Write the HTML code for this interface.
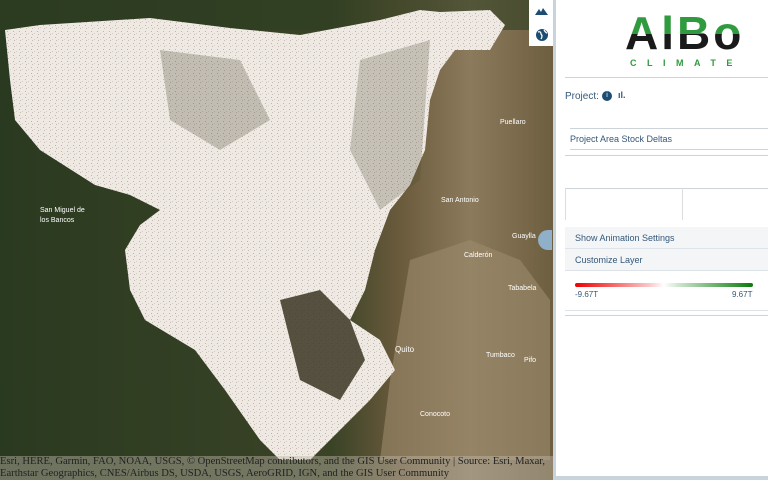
<!DOCTYPE html>
<html><head><style>
*{margin:0;padding:0;box-sizing:border-box}
body{width:768px;height:480px;overflow:hidden;font-family:"Liberation Sans",sans-serif;background:#fff;position:relative}
#map{position:absolute;left:0;top:0;width:553px;height:480px;overflow:hidden}
#attr{position:absolute;left:0;top:456px;width:553px;height:24px;background:rgba(190,185,170,0.45);font-family:"Liberation Serif",serif;font-size:10.6px;line-height:12px;color:#222;white-space:nowrap;padding-left:0}
#panel{position:absolute;left:553px;top:0;width:215px;height:480px;background:#fff;border-left:3px solid #c9d3dc}
.ctrl{position:absolute;left:529px;top:0;width:24px;height:46px;background:#fff}
.t{color:#34587a;font-size:9px}
</style></head><body>
<div id="map">
<svg width="553" height="480" viewBox="0 0 553 480">
<defs>
<linearGradient id="bg" x1="0" x2="1" y1="0" y2="0">
<stop offset="0" stop-color="#2a3a20"/><stop offset="0.6" stop-color="#3a4326"/><stop offset="0.72" stop-color="#6a5a3c"/><stop offset="0.85" stop-color="#8c7a5c"/><stop offset="1" stop-color="#6e5e40"/></linearGradient>
<pattern id="sp" width="6" height="6" patternUnits="userSpaceOnUse"><rect width="6" height="6" fill="#efe9e4"/><rect x="1" y="1" width="1" height="1" fill="#e9a0a0"/><rect x="4" y="3" width="1" height="1" fill="#a8e8a8"/><rect x="2" y="4" width="1" height="1" fill="#c8b8b0"/></pattern>
</defs>
<rect width="553" height="480" fill="url(#bg)"/>
<rect x="0" y="0" width="553" height="30" fill="#2d3d22" opacity="0.6"/>
<polygon points="410,260 470,240 520,260 550,300 550,460 380,460 390,380" fill="#9c8a6c" opacity="0.6"/>
<polygon fill="url(#sp)" points="5,30 40,25 150,18 230,28 300,35 380,20 420,10 440,12 490,10 505,25 490,50 455,50 440,70 430,100 425,150 410,185 390,210 375,250 365,290 350,320 380,340 395,370 370,400 340,430 310,460 280,460 260,440 225,390 195,350 145,320 130,290 125,250 140,225 160,210 130,195 95,185 40,150 15,120 10,80"/>
<polygon fill="#3a3522" opacity="0.85" points="280,300 320,290 350,320 365,360 340,400 300,380 290,340"/>
<polygon fill="#5a5a40" opacity="0.3" points="160,50 240,60 270,120 220,150 170,120"/>
<polygon fill="#4a4a30" opacity="0.25" points="360,60 430,40 420,180 380,210 350,150"/>
<g fill="#fff" font-family="Liberation Sans" font-size="7" >
<text x="500" y="124">Puellaro</text><text x="441" y="202">San Antonio</text>
<text x="40" y="212">San Miguel de</text><text x="40" y="222">los Bancos</text>
<text x="464" y="257">Calderón</text><text x="512" y="238">Guaylla</text>
<text x="508" y="290">Tababela</text><text x="395" y="352" font-size="8">Quito</text>
<text x="486" y="357">Tumbaco</text><text x="524" y="362">Pifo</text><text x="420" y="416">Conocoto</text>
</g>
</svg>
<div id="attr">Esri, HERE, Garmin, FAO, NOAA, USGS, © OpenStreetMap contributors, and the GIS User Community | Source: Esri, Maxar,<br>Earthstar Geographics, CNES/Airbus DS, USDA, USGS, AeroGRID, IGN, and the GIS User Community</div>
</div>
<div class="ctrl">
<svg width="24" height="46"><path d="M6 15 L10 9 L12 12 L14 8 L19 15Z" fill="#1d4d72"/><circle cx="13" cy="35" r="6" fill="#1d4d72"/><path d="M9 32 Q12 31 12 34 Q14 36 12 39 M15 30 Q17 33 18 33" stroke="#fff" stroke-width="1.3" fill="none"/></svg>
</div>
<div style="position:absolute;left:538px;top:230px;width:14px;height:20px;border-radius:10px 0 0 10px;background:#8fb0c8"></div>
<div id="panel">
<div style="position:absolute;left:69px;top:10px;font-family:'Liberation Sans';font-weight:bold;font-size:46px;letter-spacing:3px;line-height:46px;background:linear-gradient(#2f9a3e 0,#2f9a3e 52%,#1a1a1a 52%);-webkit-background-clip:text;color:transparent">AlBo</div>
<div style="position:absolute;left:74px;top:58px;font-weight:bold;font-size:9px;letter-spacing:10.5px;color:#2f9a3e">CLIMATE</div>
<div style="position:absolute;left:9px;top:77px;width:206px;height:1px;background:#ccd4da"></div>
<div class="t" style="position:absolute;left:9px;top:91px;font-size:10px">Project:</div>
<div style="position:absolute;left:46px;top:91px;width:10px;height:10px;border-radius:50%;background:#1d4d72;color:#fff;font-size:7px;text-align:center;line-height:10px">i</div>
<div class="t" style="position:absolute;left:62px;top:90px;font-size:9px;font-weight:bold">ıl.</div>
<div style="position:absolute;left:14px;top:128px;width:201px;height:1px;background:#ccd4da"></div>
<div class="t" style="position:absolute;left:14px;top:134px">Project Area Stock Deltas</div>
<div style="position:absolute;left:14px;top:149px;width:201px;height:1px;background:#ccd4da"></div>
<div style="position:absolute;left:9px;top:155px;width:206px;height:1px;background:#ccd4da"></div>
<div style="position:absolute;left:9px;top:188px;width:206px;height:1px;background:#ccd4da"></div>
<div style="position:absolute;left:9px;top:188px;width:1px;height:32px;background:#ddd"></div>
<div style="position:absolute;left:126px;top:188px;width:1px;height:32px;background:#ddd"></div>
<div style="position:absolute;left:9px;top:227px;width:206px;height:22px;background:#f3f5f7;border-bottom:1px solid #dde3e8"></div>
<div class="t" style="position:absolute;left:19px;top:233px">Show Animation Settings</div>
<div style="position:absolute;left:9px;top:249px;width:206px;height:22px;background:#f3f5f7;border-bottom:1px solid #dde3e8"></div>
<div class="t" style="position:absolute;left:19px;top:255px">Customize Layer</div>
<div style="position:absolute;left:19px;top:283px;width:178px;height:4px;border-radius:2px;background:linear-gradient(90deg,#e00 0,#f9caca 42%,#fff 50%,#cfe5cf 58%,#0a7a0a 100%)"></div>
<div class="t" style="position:absolute;left:19px;top:290px;font-size:8px">-9.67T</div>
<div class="t" style="position:absolute;left:176px;top:290px;font-size:8px">9.67T</div>
<div style="position:absolute;left:9px;top:310px;width:206px;height:1px;background:#dde3e8"></div>
<div style="position:absolute;left:9px;top:315px;width:206px;height:1px;background:#ccd4da"></div>
<div style="position:absolute;left:0;top:476px;width:215px;height:4px;background:#c9d3dc"></div>
</div>
</body></html>
